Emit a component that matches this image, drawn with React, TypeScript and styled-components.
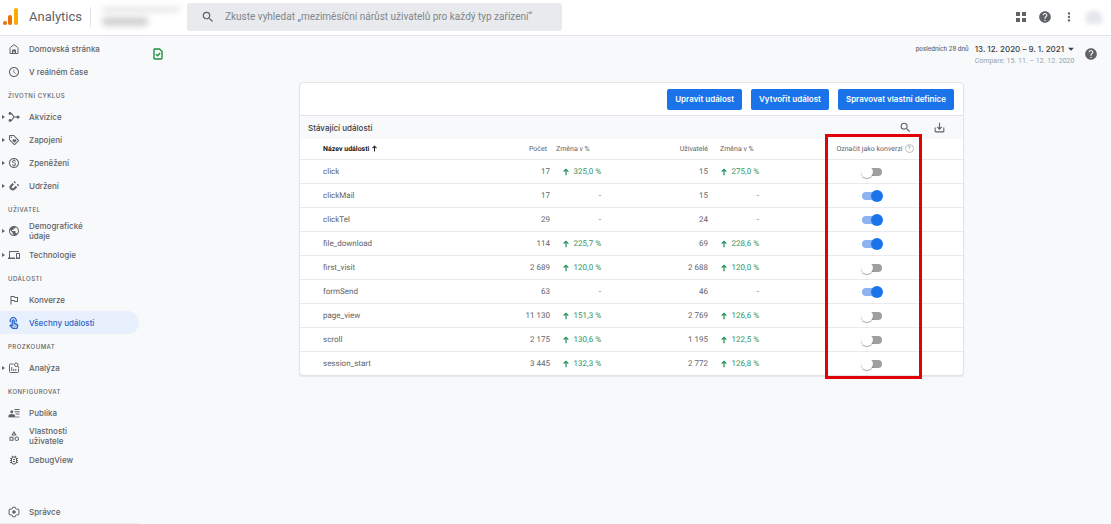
import React, { useState } from "react";
import styled, { createGlobalStyle, css } from "styled-components";
import type { IconType } from "react-icons";
import {
  MdAccessTime,
  MdArrowDropDown,
  MdDevices,
  MdHelp,
  MdMoreVert,
  MdOutlineBugReport,
  MdOutlineCategory,
  MdOutlineLoyalty,
  MdOutlineMonetizationOn,
  MdOutlinedFlag,
  MdPublic,
  MdSaveAlt,
  MdSearch,
} from "react-icons/md";

const brandFont = `Inter, "Liberation Sans", sans-serif`;
const dataFont = `Roboto, "Liberation Sans", sans-serif`;

const GlobalStyle = createGlobalStyle`
  *, *::before, *::after { box-sizing: border-box; }
  body { margin: 0; background: #f8f9fb; color: #5f6368; font-family: ${brandFont}; }
  button, input { font: inherit; color: inherit; }
`;

/* ---------- drawn icons ---------- */

type IconProps = { size?: number };

const Drawn = ({ size = 11, children }: IconProps & { children: React.ReactNode }) => (
  <svg
    width={size}
    height={size}
    viewBox="0 0 24 24"
    fill="none"
    stroke="currentColor"
    strokeWidth="2"
    aria-hidden="true"
  >
    {children}
  </svg>
);

const HomeIcon = (p: IconProps) => (
  <Drawn {...p}>
    <path d="M4 21V10.500Q4 9.500 4.800 8.900L12 3.200L19.200 8.900Q20 9.500 20 10.500V21Z" />
    <path d="M8 20v-5.500q0-1.500 1.500-1.500h5q1.500 0 1.500 1.500V20h-2.500v-3h-3v3z" fill="currentColor" stroke="none" />
  </Drawn>
);

const AcquisitionIcon = (p: IconProps) => (
  <Drawn {...p}>
    <path d="M4 5h3l5 7-5 7H4M12 12h7" strokeWidth="2.400" />
    <circle cx="4" cy="5" r="2.800" fill="currentColor" stroke="none" />
    <circle cx="4" cy="19" r="2.800" fill="currentColor" stroke="none" />
    <circle cx="20" cy="12" r="3.200" fill="currentColor" stroke="none" />
  </Drawn>
);

const RetentionIcon = (p: IconProps) => (
  <Drawn {...p}>
    <path d="M10.500 7.500L6.500 11.500a4.200 4.200 0 0 0 6 6L17 13" strokeWidth="4.200" />
    <path d="M12.500 5.500l2-2M19 11l2-2" strokeWidth="4" />
  </Drawn>
);

const TapIcon = (p: IconProps) => (
  <Drawn {...p}>
    <path d="M5.500 10.500a6 6 0 1 1 10 0" strokeWidth="2.400" />
    <path
      d="M8.500 7.500a2 2 0 0 1 4 0v5l5.500 2.300q1.500.7 1.300 2.400l-.7 4.300q-.2 1.500-1.800 1.500H10.500q-.9 0-1.600-.7L4 17.300l1.300-1.400 3.200.8z"
      fill="currentColor"
      fillOpacity="0.350"
      strokeWidth="2.400"
    />
  </Drawn>
);

const AnalysisIcon = (p: IconProps) => (
  <Drawn {...p}>
    <path d="M11 4H5q-2 0-2 2v13q0 2 2 2h14q2 0 2-2v-6" />
    <path d="M7.500 18v-8M11.500 18v-4M15.500 18v-4" />
    <circle cx="16.500" cy="5.500" r="3.500" />
    <path d="M19 8l3 4" />
  </Drawn>
);

const AudienceIcon = (p: IconProps) => (
  <Drawn {...p}>
    <circle cx="7.500" cy="9.500" r="3" fill="currentColor" stroke="none" />
    <path d="M1 20v-2.200q0-3.800 6.500-3.800t6.500 3.800V20z" fill="currentColor" stroke="none" />
    <path d="M13 5h10M13 9.500h10M15 14h8" />
    <path d="M1 20h22" strokeWidth="1.500" />
  </Drawn>
);

const AdminIcon = (p: IconProps) => (
  <Drawn {...p}>
    <path d="M9.500 2.500h5l.8 2.800 2.200 1.200 2.800-.8 2.400 4.300-2 2 2 2-2.400 4.300-2.800-.8-2.200 1.200-.8 2.800h-5l-.8-2.800-2.200-1.200-2.800.8L1.300 14l2-2-2-2 2.400-4.300 2.800.8 2.200-1.200z" />
    <circle cx="12" cy="12" r="3.600" fill="currentColor" stroke="none" />
  </Drawn>
);

const ArrowUpIcon = (p: IconProps) => (
  <Drawn {...p}>
    <path d="M12 22V4M5 11l7-7 7 7" strokeWidth="3.600" />
  </Drawn>
);

const AppsIcon = () => (
  <svg width="12" height="12" viewBox="0 0 12 12" fill="currentColor" aria-hidden="true">
    <path d="M1 1h4v4H1zM7 1h4v4H7zM1 7h4v4H1zM7 7h4v4H7z" />
  </svg>
);

const AnalyticsLogo = () => (
  <svg width="16" height="18" viewBox="0 0 16 18" aria-hidden="true">
    <rect x="11" y="0" width="4" height="17" rx="2" fill="#f9ab00" />
    <rect x="5" y="7" width="4" height="10" rx="2" fill="#e8710a" />
    <circle cx="2" cy="15" r="2" fill="#e37400" />
  </svg>
);

const StatusIcon = () => (
  <svg width="10" height="12" viewBox="0 0 10 12" fill="none" stroke="#1e8e3e" aria-hidden="true">
    <path d="M1.500 1H6.500L9 3.500V10Q9 11 8 11H2Q1 11 1 10V1.500Z" strokeWidth="1.400" />
    <path d="M3 6.300L4.500 7.800L7.200 5" strokeWidth="1.300" />
  </svg>
);

/* ---------- header ---------- */

const Page = styled.div`
  display: flex;
  flex-direction: column;
  min-height: 100vh;
`;

const TopBar = styled.header`
  display: flex;
  align-items: center;
  height: 36px;
  padding: 0 9px 2px 3px;
  background: #fff;
  border-bottom: 1px solid #e1e3e6;
`;

const Brand = styled.a`
  display: flex;
  align-items: center;
  gap: 10px;
  width: 87px;
  color: #5f6368;
  font-family: ${dataFont};
  font-size: 13px;
  line-height: 18px;
  text-decoration: none;
`;

const Account = styled.div`
  display: flex;
  flex-direction: column;
  gap: 5px;
  width: 97px;
  height: 20px;
  padding-left: 11px;
  border-left: 1px solid #e1e3e6;
`;

const Smudge = styled.span<{ $width: number; $height: number; $color: string }>`
  width: ${(p) => p.$width}px;
  height: ${(p) => p.$height}px;
  background: ${(p) => p.$color};
  border-radius: 4px;
  filter: blur(3px);
`;

const SearchBox = styled.label`
  display: flex;
  align-items: center;
  gap: 10px;
  flex: 0 1 375px;
  height: 28px;
  padding: 0 14px;
  background: #e8eaed;
  border-radius: 3px;
`;

const SearchInput = styled.input`
  flex: 1;
  min-width: 0;
  padding: 0;
  border: 0;
  outline: 0;
  background: transparent;
  font-family: ${dataFont};
  font-size: 10px;
  line-height: 14px;
  &::placeholder { color: #80868b; opacity: 1; }
`;

const TopActions = styled.div`
  display: flex;
  align-items: center;
  gap: 10px;
  margin-left: auto;
`;

const IconButton = styled.button`
  display: flex;
  align-items: center;
  justify-content: center;
  min-width: 14px;
  padding: 0;
  border: 0;
  background: transparent;
  color: #5f6368;
  cursor: pointer;
`;

const Avatar = styled.span`
  width: 16px;
  height: 14px;
  background: #e6e7ed;
  border-radius: 50% 50% 20% 20%;
  filter: blur(2px);
`;

/* ---------- navigation ---------- */

const Body = styled.div`
  display: flex;
  flex: 1;
`;

const Sidebar = styled.nav`
  display: flex;
  flex-direction: column;
  width: 139px;
  padding-top: 1px;
  border-bottom: 1px solid #e8eaed;
`;

const SectionTitle = styled.h2`
  height: 22px;
  margin: 0;
  padding: 3px 0 0 8px;
  font-size: 6px;
  font-weight: 500;
  line-height: 20px;
  letter-spacing: 0.5px;
  text-transform: uppercase;
`;

const NavLink = styled.a<{ $active?: boolean; $last?: boolean }>`
  display: grid;
  grid-template-columns: 8px 12px 1fr;
  align-items: center;
  min-height: 23px;
  color: #5f6368;
  font-size: 8px;
  font-weight: 500;
  line-height: 10px;
  text-decoration: none;
  svg { justify-self: center; }
  ${(p) => p.$last && css`margin-top: auto;`}
  ${(p) =>
    p.$active &&
    css`
      color: #2a63c4;
      background: #e8f0fe;
      border-radius: 0 12px 12px 0;
    `}
`;

const NavText = styled.span`
  max-width: 83px;
  padding: 2px 0 2px 9px;
`;

const Expander = styled.span`
  width: 0;
  margin-left: 2px;
  border: 2px solid transparent;
  border-left: 3px solid #5f6368;
  border-right: 0;
`;

/* ---------- report area ---------- */

const Main = styled.main`
  flex: 1;
  min-width: 0;
`;

const ReportBar = styled.div`
  display: flex;
  align-items: center;
  height: 36px;
  padding: 0 13px 0 14px;
`;

const Period = styled.div`
  display: grid;
  grid-template-columns: auto auto;
  column-gap: 6px;
  align-items: center;
  margin: 0 6px 0 auto;
`;

const PeriodName = styled.span`
  font-size: 6px;
  font-weight: 500;
  line-height: 12px;
`;

const DateButton = styled.button`
  display: flex;
  align-items: center;
  padding: 0;
  border: 0;
  background: transparent;
  color: #3c4043;
  font-size: 8px;
  font-weight: 500;
  line-height: 12px;
  cursor: pointer;
`;

const Compare = styled.span`
  grid-column: 2;
  color: #9aa0a6;
  font-family: ${dataFont};
  font-size: 7px;
  line-height: 10px;
`;

const Card = styled.section`
  margin: 10px 147px 0 160px;
  background: #fff;
  border: 1px solid #e1e3e6;
  border-radius: 4px;
  box-shadow: 0 1px 1px rgba(60, 64, 67, 0.1);
`;

const CardActions = styled.div`
  display: flex;
  justify-content: flex-end;
  align-items: center;
  gap: 9px;
  height: 33px;
  padding: 0 9px;
  border-bottom: 1px solid #e1e3e6;
`;

const PrimaryButton = styled.button`
  height: 21px;
  padding: 0 8px;
  border: 0;
  border-radius: 2px;
  background: #1a73e8;
  color: #fff;
  font-size: 8px;
  font-weight: 600;
  line-height: 12px;
  cursor: pointer;
`;

const TableBar = styled.div`
  display: flex;
  align-items: center;
  gap: 20px;
  height: 23px;
  padding: 0 17px 0 8px;
  background: #f8f9fb;
`;

const TableTitle = styled.h1`
  margin: 0 auto 0 0;
  color: #3c4043;
  font-size: 8px;
  font-weight: 500;
  line-height: 12px;
`;

const TableArea = styled.div`
  position: relative;
`;

const Highlight = styled.div`
  position: absolute;
  top: -5px;
  right: 41px;
  bottom: -4px;
  width: 97px;
  border: 3px solid #e00208;
  pointer-events: none;
`;

const EventTable = styled.table`
  width: 100%;
  table-layout: fixed;
  border-collapse: collapse;
  color: #5f6368;
  font-family: ${dataFont};
  font-size: 8px;
  line-height: 12px;
  text-rendering: geometricPrecision;
  tr + tr, tbody tr { border-top: 1px solid #e8eaed; }
`;

const Column = styled.col<{ $width?: number }>`
  width: ${(p) => (p.$width ? `${p.$width}px` : "auto")};
`;

const HeadCell = styled.th<{ $align?: string; $left?: number; $right?: number; $sorted?: boolean }>`
  height: 20px;
  padding: 0 ${(p) => p.$right ?? 0}px 0 ${(p) => p.$left ?? 0}px;
  color: ${(p) => (p.$sorted ? "#202124" : "#5f6368")};
  font-size: 7px;
  font-weight: ${(p) => (p.$sorted ? 700 : 400)};
  text-align: ${(p) => p.$align ?? "left"};
  white-space: nowrap;
`;

const HeadLabel = styled.span<{ $center?: boolean }>`
  display: flex;
  align-items: center;
  justify-content: ${(p) => (p.$center ? "center" : "flex-start")};
  gap: 2px;
`;

const Cell = styled.td<{ $align?: string; $left?: number }>`
  height: 24px;
  padding: 1px 0 0 ${(p) => p.$left ?? 0}px;
  text-align: ${(p) => p.$align ?? "left"};
  white-space: nowrap;
`;

const Change = styled.span<{ $none?: boolean }>`
  display: flex;
  align-items: center;
  justify-content: ${(p) => (p.$none ? "flex-end" : "space-between")};
  width: 38px;
  color: ${(p) => (p.$none ? "#5f6368" : "#34935a")};
  svg { margin-left: -1px; color: #1e8e5a; }
`;

const Hint = styled.span`
  width: 9px;
  height: 9px;
  border: 1px solid #bdc1c6;
  border-radius: 50%;
  color: #80868b;
  font-size: 6px;
  line-height: 7px;
  text-align: center;
`;

const Switch = styled.input`
  display: block;
  width: 20px;
  height: 8px;
  margin: 0 auto;
  appearance: none;
  border-radius: 4px;
  background: #9e9e9e;
  cursor: pointer;
  &::before {
    content: "";
    display: block;
    width: 12px;
    height: 12px;
    margin: -2px 0 0 -1px;
    border-radius: 50%;
    background: #fff;
    box-shadow: 0 1px 1px rgba(0, 0, 0, 0.35);
  }
  &:checked { background: #8ab4f3; }
  &:checked::before { margin-left: 9px; background: #1a73e8; box-shadow: none; }
`;

/* ---------- data ---------- */

type NavEntry = { label: string; icon: IconType | ((p: IconProps) => React.ReactNode); expandable?: boolean; active?: boolean };

const navigation: { title?: string; items: NavEntry[] }[] = [
  {
    items: [
      { label: "Domovská stránka", icon: HomeIcon },
      { label: "V reálném čase", icon: MdAccessTime },
    ],
  },
  {
    title: "Životní cyklus",
    items: [
      { label: "Akvizice", icon: AcquisitionIcon, expandable: true },
      { label: "Zapojení", icon: MdOutlineLoyalty, expandable: true },
      { label: "Zpeněžení", icon: MdOutlineMonetizationOn, expandable: true },
      { label: "Udržení", icon: RetentionIcon, expandable: true },
    ],
  },
  {
    title: "Uživatel",
    items: [
      { label: "Demografické údaje", icon: MdPublic, expandable: true },
      { label: "Technologie", icon: MdDevices, expandable: true },
    ],
  },
  {
    title: "Události",
    items: [
      { label: "Konverze", icon: MdOutlinedFlag },
      { label: "Všechny události", icon: TapIcon, active: true },
    ],
  },
  { title: "Prozkoumat", items: [{ label: "Analýza", icon: AnalysisIcon, expandable: true }] },
  {
    title: "Konfigurovat",
    items: [
      { label: "Publika", icon: AudienceIcon },
      { label: "Vlastnosti uživatele", icon: MdOutlineCategory },
      { label: "DebugView", icon: MdOutlineBugReport },
    ],
  },
];

type EventRow = { name: string; count: string; countChange?: string; users: string; usersChange?: string; conversion: boolean };

const events: EventRow[] = [
  { name: "click", count: "17", countChange: "325,0 %", users: "15", usersChange: "275,0 %", conversion: false },
  { name: "clickMail", count: "17", users: "15", conversion: true },
  { name: "clickTel", count: "29", users: "24", conversion: true },
  { name: "file_download", count: "114", countChange: "225,7 %", users: "69", usersChange: "228,6 %", conversion: true },
  { name: "first_visit", count: "2 689", countChange: "120,0 %", users: "2 688", usersChange: "120,0 %", conversion: false },
  { name: "formSend", count: "63", users: "46", conversion: true },
  { name: "page_view", count: "11 130", countChange: "151,3 %", users: "2 769", usersChange: "126,6 %", conversion: false },
  { name: "scroll", count: "2 175", countChange: "130,6 %", users: "1 195", usersChange: "122,5 %", conversion: false },
  { name: "session_start", count: "3 445", countChange: "132,3 %", users: "2 772", usersChange: "126,8 %", conversion: false },
];

const NavItem = ({ entry, last }: { entry: NavEntry; last?: boolean }) => {
  const Icon = entry.icon;
  return (
    <NavLink href="#" $active={entry.active} $last={last} aria-current={entry.active ? "page" : undefined}>
      {entry.expandable ? <Expander /> : <span />}
      <Icon size={12} />
      <NavText>{entry.label}</NavText>
    </NavLink>
  );
};

const ChangeValue = ({ value }: { value?: string }) =>
  value ? (
    <Change>
      <ArrowUpIcon size={8} />
      {value}
    </Change>
  ) : (
    <Change $none>-</Change>
  );

export default function App() {
  const [marked, setMarked] = useState(() => events.map((e) => e.conversion));
  const toggle = (index: number) => setMarked((list) => list.map((on, i) => (i === index ? !on : on)));

  return (
    <Page>
      <GlobalStyle />
      <TopBar>
        <Brand href="#">
          <AnalyticsLogo />
          Analytics
        </Brand>
        <Account>
          <Smudge $width={78} $height={5} $color="#e4e4e4" />
          <Smudge $width={46} $height={9} $color="#d0d0d0" />
        </Account>
        <SearchBox>
          <MdSearch size={14} />
          <SearchInput
            type="search"
            aria-label="Vyhledat"
            placeholder="Zkuste vyhledat „meziměsíční nárůst uživatelů pro každý typ zařízení“"
          />
        </SearchBox>
        <TopActions>
          <IconButton aria-label="Aplikace"><AppsIcon /></IconButton>
          <IconButton aria-label="Nápověda"><MdHelp size={14} /></IconButton>
          <IconButton aria-label="Další možnosti"><MdMoreVert size={14} /></IconButton>
          <Avatar />
        </TopActions>
      </TopBar>
      <Body>
        <Sidebar>
          {navigation.map((group, index) => (
            <React.Fragment key={index}>
              {group.title && <SectionTitle>{group.title}</SectionTitle>}
              {group.items.map((entry) => (
                <NavItem key={entry.label} entry={entry} />
              ))}
            </React.Fragment>
          ))}
          <NavItem entry={{ label: "Správce", icon: AdminIcon }} last />
        </Sidebar>
        <Main>
          <ReportBar>
            <StatusIcon />
            <Period>
              <PeriodName>posledních 28 dnů</PeriodName>
              <DateButton>
                13. 12. 2020 – 9. 1. 2021
                <MdArrowDropDown size={14} />
              </DateButton>
              <Compare>Compare: 15. 11. – 12. 12. 2020</Compare>
            </Period>
            <IconButton aria-label="Nápověda k přehledu"><MdHelp size={14} /></IconButton>
          </ReportBar>
          <Card>
            <CardActions>
              <PrimaryButton>Upravit událost</PrimaryButton>
              <PrimaryButton>Vytvořit událost</PrimaryButton>
              <PrimaryButton>Spravovat vlastní definice</PrimaryButton>
            </CardActions>
            <TableBar>
              <TableTitle>Stávající události</TableTitle>
              <IconButton aria-label="Hledat v tabulce"><MdSearch size={13} /></IconButton>
              <IconButton aria-label="Stáhnout"><MdSaveAlt size={13} /></IconButton>
            </TableBar>
            <TableArea>
              <EventTable>
                <colgroup>
                  <Column />
                  <Column $width={60} />
                  <Column $width={58} />
                  <Column $width={100} />
                  <Column $width={116} />
                  <Column $width={96} />
                  <Column $width={43} />
                </colgroup>
                <thead>
                  <tr>
                    <HeadCell $left={23} $sorted aria-sort="ascending">
                      <HeadLabel>
                        Název události <ArrowUpIcon size={7} />
                      </HeadLabel>
                    </HeadCell>
                    <HeadCell $align="right" $right={3}>Počet</HeadCell>
                    <HeadCell $left={6}>Změna v %</HeadCell>
                    <HeadCell $align="right">Uživatelé</HeadCell>
                    <HeadCell $left={12}>Změna v %</HeadCell>
                    <HeadCell $left={6}>
                      <HeadLabel $center>
                        Označit jako konverzi <Hint>?</Hint>
                      </HeadLabel>
                    </HeadCell>
                    <HeadCell />
                  </tr>
                </thead>
                <tbody>
                  {events.map((event, index) => (
                    <tr key={event.name}>
                      <Cell $left={23}>{event.name}</Cell>
                      <Cell $align="right">{event.count}</Cell>
                      <Cell $left={13}><ChangeValue value={event.countChange} /></Cell>
                      <Cell $align="right">{event.users}</Cell>
                      <Cell $left={13}><ChangeValue value={event.usersChange} /></Cell>
                      <Cell>
                        <Switch
                          type="checkbox"
                          role="switch"
                          aria-label={`Označit ${event.name} jako konverzi`}
                          checked={marked[index]}
                          onChange={() => toggle(index)}
                        />
                      </Cell>
                      <Cell />
                    </tr>
                  ))}
                </tbody>
              </EventTable>
              <Highlight />
            </TableArea>
          </Card>
        </Main>
      </Body>
    </Page>
  );
}
